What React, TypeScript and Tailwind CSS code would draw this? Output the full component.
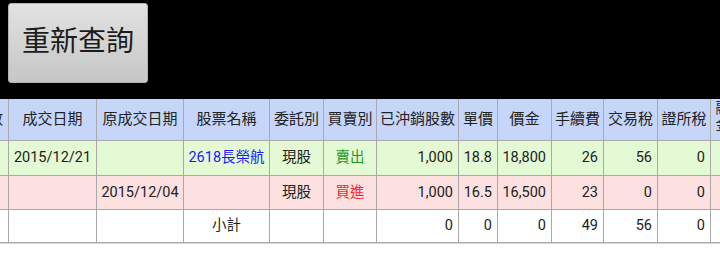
type Col = {
  key: string;
  title: string;
  width: string;
  align: "center" | "right";
  wrap?: boolean;
};

// 表は横スクロール済みの状態（先頭列が左に切れている）
const columns: Col[] = [
  { key: "qty", title: "成交股數", width: "w-[71px] -ml-[62px]", align: "right" },
  { key: "date", title: "成交日期", width: "w-[88px]", align: "center" },
  { key: "origDate", title: "原成交日期", width: "w-[87px]", align: "center" },
  { key: "name", title: "股票名稱", width: "w-[86px]", align: "center" },
  { key: "kind", title: "委託別", width: "w-[54px]", align: "center" },
  { key: "side", title: "買賣別", width: "w-[53px]", align: "center" },
  { key: "offset", title: "已沖銷股數", width: "w-[82px]", align: "right" },
  { key: "price", title: "單價", width: "w-[39px]", align: "right" },
  { key: "amount", title: "價金", width: "w-[54px]", align: "right" },
  { key: "fee", title: "手續費", width: "w-[52px]", align: "right" },
  { key: "tax", title: "交易稅", width: "w-[54px]", align: "right" },
  { key: "stax", title: "證所稅", width: "w-[53px]", align: "right" },
  { key: "margin", title: "融資金額", width: "w-[40px]", align: "right", wrap: true },
];

type Row = {
  bg: string;
  height: string;
  cells: Record<string, { text: string; color?: string }>;
};

const rows: Row[] = [
  {
    bg: "bg-[#e3fad5]",
    height: "h-[35px]",
    cells: {
      date: { text: "2015/12/21" },
      name: { text: "2618長榮航", color: "text-[#1a1aff]" },
      kind: { text: "現股" },
      side: { text: "賣出", color: "text-[#1f9a1f]" },
      offset: { text: "1,000" },
      price: { text: "18.8" },
      amount: { text: "18,800" },
      fee: { text: "26" },
      tax: { text: "56" },
      stax: { text: "0" },
    },
  },
  {
    bg: "bg-[#fde0e0]",
    height: "h-[34px]",
    cells: {
      origDate: { text: "2015/12/04" },
      kind: { text: "現股" },
      side: { text: "買進", color: "text-[#ff1f1f]" },
      offset: { text: "1,000" },
      price: { text: "16.5" },
      amount: { text: "16,500" },
      fee: { text: "23" },
      tax: { text: "0" },
      stax: { text: "0" },
    },
  },
  {
    bg: "bg-white",
    height: "h-[33px]",
    cells: {
      name: { text: "小計" },
      offset: { text: "0" },
      price: { text: "0" },
      amount: { text: "0" },
      fee: { text: "49" },
      tax: { text: "56" },
      stax: { text: "0" },
    },
  },
];

export default function App() {
  return (
    <div className="w-[720px] h-[280px] overflow-hidden bg-white font-['Roboto','Noto_Sans_CJK_TC',sans-serif]">
      <div className="h-[99px] bg-black pt-[3px] pl-[8px]">
        <button
          type="button"
          className="w-[140px] h-[80px] rounded-[3px] border border-[#b4b4b4] bg-gradient-to-b from-[#e2e2e2] to-[#c6c6c6] text-[28px] text-[#1c1c1c] leading-none pb-[2px]"
        >
          重新查詢
        </button>
      </div>

      <div className="overflow-hidden">
        <div className="flex h-[42px] bg-[#c6d6fb] border-b border-[#a9a9a9]">
          {columns.map((c) => (
            <div
              key={c.key}
              className={`${c.width} shrink-0 border-r border-[#a9a9a9] flex items-center justify-center text-center text-[15px] leading-[17px] text-[#222] ${
                c.wrap ? "px-[4px] items-start pt-[1px]" : "px-0 whitespace-nowrap"
              }`}
            >
              {c.title}
            </div>
          ))}
        </div>

        {rows.map((r, i) => (
          <div key={i} className={`flex ${r.height} ${r.bg} border-b border-[#a9a9a9]`}>
            {columns.map((c) => {
              const cell = r.cells[c.key];
              return (
                <div
                  key={c.key}
                  className={`${c.width} shrink-0 border-r border-[#a9a9a9] flex items-center px-[5px] text-[14.5px] whitespace-nowrap ${
                    c.align === "right" ? "justify-end" : "justify-center"
                  } ${cell?.color ?? "text-[#222]"}`}
                >
                  {cell?.text}
                </div>
              );
            })}
          </div>
        ))}
        <div className="h-px bg-[#d6d6d6]" />
      </div>
    </div>
  );
}
